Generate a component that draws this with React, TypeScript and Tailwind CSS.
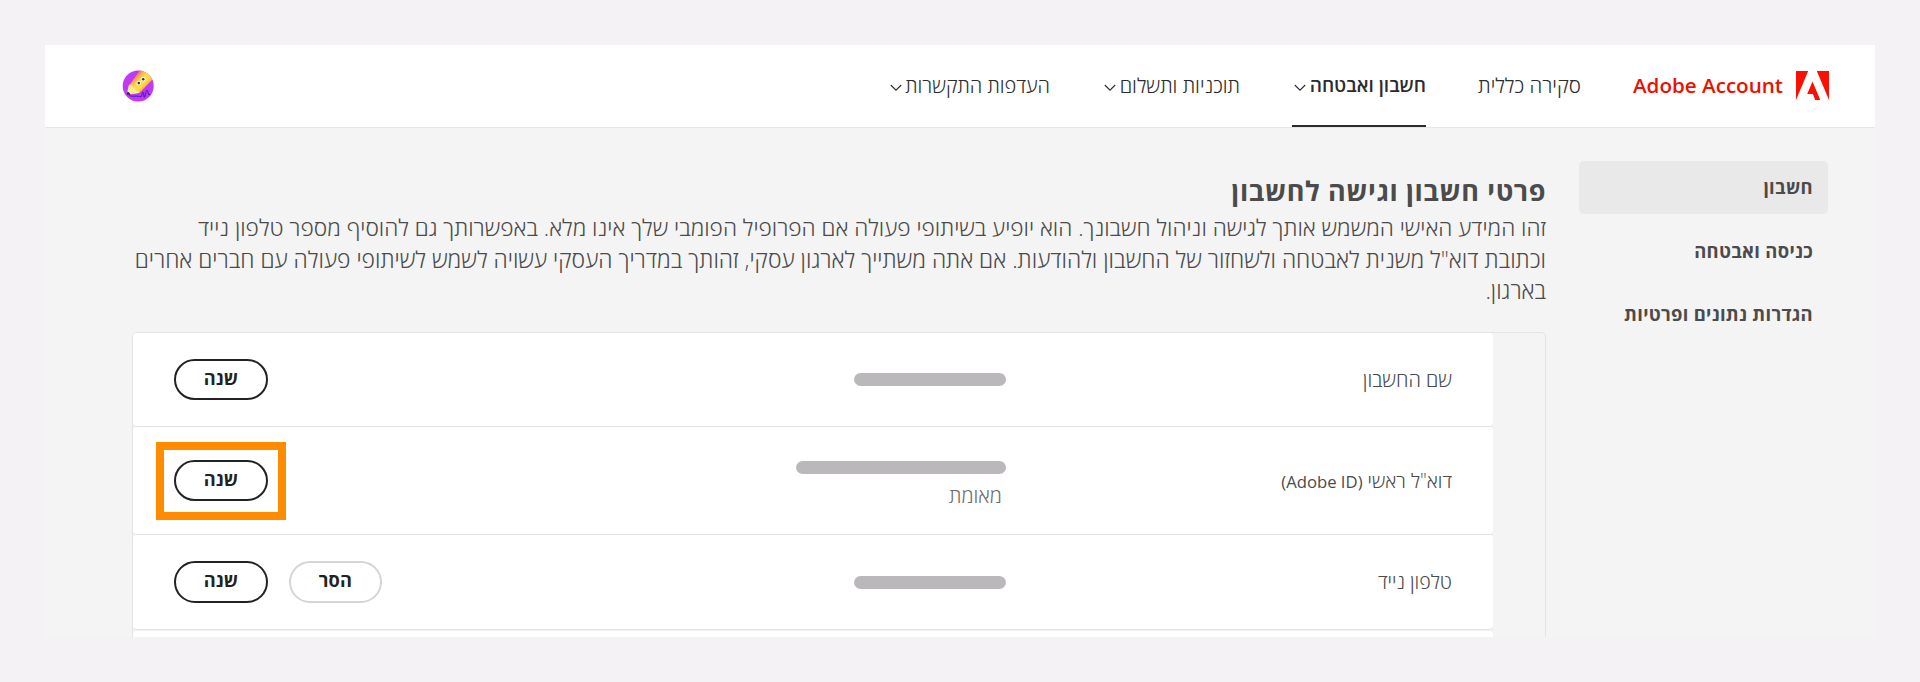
import clsx from 'clsx';

type NavItem = { label: string; className: string; active?: boolean; menu?: boolean };

const navItems: NavItem[] = [
  { label: 'סקירה כללית', className: 'w-[103px] text-[20.5px]' },
  { label: 'חשבון ואבטחה', className: 'w-[134px] text-[19px]', active: true, menu: true },
  { label: 'תוכניות ותשלום', className: 'w-[138px] text-[20.2px]', menu: true },
  { label: 'העדפות התקשרות', className: 'w-[162px] text-[20px]', menu: true },
];

const sideItems = [
  { label: 'חשבון', active: true },
  { label: 'כניסה ואבטחה' },
  { label: 'הגדרות נתונים ופרטיות' },
];

function AdobeLogo() {
  return (
    <svg width="33" height="29" viewBox="0 0 33 29" fill="#fa0f00">
      <path d="M0 0h12.2L0 29z" />
      <path d="M20.8 0H33v29z" />
      <path d="M16.5 10.4 24.3 29h-5.1l-2.3-5.9h-5.7z" />
    </svg>
  );
}

function Chevron() {
  return (
    <svg width="12" height="8" viewBox="0 0 12 8" fill="none" stroke="#2c2c2c" strokeWidth="1.1">
      <path d="M.8 1 6 6.2 11.2 1" />
    </svg>
  );
}

function Avatar() {
  return (
    <svg width="32" height="32" viewBox="0 0 32 32">
      <defs>
        <clipPath id="avatar">
          <circle cx="16.2" cy="16" r="15.5" />
        </clipPath>
        <linearGradient id="pencil" x1="12" y1="7" x2="24" y2="18" gradientUnits="userSpaceOnUse">
          <stop offset="0" stopColor="#f2707a" />
          <stop offset=".2" stopColor="#fdb04a" />
          <stop offset=".45" stopColor="#ffe04a" />
          <stop offset=".75" stopColor="#ffd93a" />
          <stop offset="1" stopColor="#fb9a4a" />
        </linearGradient>
      </defs>
      <g clipPath="url(#avatar)">
        <rect width="32" height="32" fill="#bf3af2" />
        <path d="M7 15.5 19-1l14 8-15.500 15.800z" fill="url(#pencil)" />
        <path d="M7 15c-.8 2.500-1.800 6-2 9.500 4 0 8.500-.500 12.500-1.700-.5-2-2-2.800-3.500-2.600 0-2-1.300-3.200-3.200-3C10.500 15.300 9 14.500 7 15z" fill="#ffec8c" />
        <path d="M5.300 21.800 4.800 25l3.600-.3c-.4-1.500-1.500-2.600-3.100-2.900z" fill="#33208a" />
        <circle cx="16.700" cy="12.900" r="2.200" fill="#fff" />
        <circle cx="21.200" cy="9.200" r="2.200" fill="#fff" />
        <circle cx="16.800" cy="13.100" r="1.300" fill="#2d2f7a" />
        <circle cx="21.200" cy="9.300" r="1.300" fill="#2d2f7a" />
        <path
          d="M7 25.500c4 2 7-.5 11 1 2.500 1 1-2.500 3-4 1.500-.5 0 5 1.500 4.500 1.700-1 .8-6.500 2.500-7 1.500 0 .5 6.500 3 4"
          fill="none"
          stroke="#5a1fc8"
          strokeWidth="1.200"
        />
      </g>
    </svg>
  );
}

function Header() {
  return (
    <header className="flex h-[83px] shrink-0 border-b border-[#e6e6e6] bg-white pr-[46px] pl-[77px]">
      <div className="flex w-[196px] items-center gap-[13px] pb-px">
        <AdobeLogo />
        <span dir="ltr" className="text-[20.6px] font-semibold whitespace-nowrap text-[#eb1000]">
          Adobe Account
        </span>
      </div>
      <nav className="mr-[52px] flex gap-[52px]">
        {navItems.map((item) => (
          <div
            key={item.label}
            className={clsx(
              'flex items-center justify-between whitespace-nowrap text-[#2c2c2c]',
              item.active ? 'border-b-2 border-[#2c2c2c] pt-px font-semibold' : 'pb-px font-light',
              item.className
            )}
          >
            <span>{item.label}</span>
            {item.menu && (
              <span className="pt-1 pl-[2px]">
                <Chevron />
              </span>
            )}
          </div>
        ))}
      </nav>
      <div className="mr-auto flex items-center pb-px">
        <Avatar />
      </div>
    </header>
  );
}

function Sidebar() {
  return (
    <aside className="mt-[33px] mr-[47px] flex w-[249px] shrink-0 flex-col gap-[11px]">
      {sideItems.map((item) => (
        <div
          key={item.label}
          className={clsx(
            'flex h-[52.5px] items-center rounded-[5px] pr-[15px] text-[18.4px] font-bold tracking-[0.3px] text-[#4b4b4b]',
            item.active && 'bg-[#e9e9e9]'
          )}
        >
          {item.label}
        </div>
      ))}
    </aside>
  );
}

function PillButton({ children, quiet }: { children: string; quiet?: boolean }) {
  return (
    <button
      className={clsx(
        'flex h-[41.5px] items-center justify-center rounded-full border-2 pb-[2px] text-[18.2px] font-bold tracking-[0.2px] text-[#222]',
        quiet ? 'w-[93px] border-[#d5d5d5]' : 'w-[94px] border-[#222]'
      )}
    >
      {children}
    </button>
  );
}

function Bar({ className }: { className: string }) {
  return <div className={clsx('h-[13px] rounded-full bg-[#bab8bb]', className)} />;
}

export default function App() {
  return (
    <div dir="rtl" className="h-[682px] overflow-hidden bg-[#f4f2f5] px-[45px] pt-[45px] font-['Open_Sans',sans-serif]">
      <div className="flex h-[592px] flex-col overflow-hidden bg-[#f4f4f4]">
        <Header />
        <div className="flex">
          <Sidebar />
          <main className="mr-[33px] w-[1414px] pt-[42px] text-[#4b4b4b]">
            <h1 className="h-[42px] text-[27px] leading-[41px] font-bold tracking-[0.6px]">פרטי חשבון וגישה לחשבון</h1>
            <div className="font-light whitespace-nowrap">
              <p className="h-[31.5px] text-[22.65px] leading-[31.5px]">
                זהו המידע האישי המשמש אותך לגישה וניהול חשבונך. הוא יופיע בשיתופי פעולה אם הפרופיל הפומבי שלך אינו מלא. באפשרותך גם להוסיף מספר טלפון נייד
              </p>
              <p className="h-[31.5px] text-[22.86px] leading-[31.5px]">
                וכתובת דוא"ל משנית לאבטחה ולשחזור של החשבון ולהודעות. אם אתה משתייך לארגון עסקי, זהותך במדריך העסקי עשויה לשמש לשיתופי פעולה עם חברים אחרים
              </p>
              <p className="h-8 text-[22.7px] leading-8">בארגון.</p>
            </div>

            <div className="mt-[25px] rounded-t-[5px] border border-b-0 border-[#e4e4e4] pr-[52px] text-[19.4px] font-light">
              <div className="flex h-[94px] items-center rounded-[4px] border-b border-[#e1e1e1] bg-white pr-[41px] pl-[41px]">
                <div className="w-[446px] text-[20px]">שם החשבון</div>
                <Bar className="w-[152px]" />
                <div className="mr-auto">
                  <PillButton>שנה</PillButton>
                </div>
              </div>

              <div className="flex h-[108px] items-center rounded-[4px] border-b border-[#e1e1e1] bg-white pr-[41px] pl-[23px]">
                <div className="w-[446px]">
                  דוא"ל ראשי <span className="text-[16.7px] font-normal">(Adobe ID)</span>
                </div>
                <div className="flex w-[210px] flex-col pt-[9px]">
                  <Bar className="w-[210px]" />
                  <div className="mt-[7px] pr-[4px] text-[20.2px] leading-[28px] text-[#6e6e6e]">מאומת</div>
                </div>
                {/* highlighted action */}
                <div className="mr-auto flex h-[78px] w-[130px] items-center justify-center border-8 border-[#ff8c00]">
                  <PillButton>שנה</PillButton>
                </div>
              </div>

              <div className="flex h-[95px] items-center rounded-[4px] border-b border-[#e1e1e1] bg-white pr-[41px] pl-[41px]">
                <div className="w-[446px] text-[19.6px]">טלפון נייד</div>
                <Bar className="w-[152px]" />
                <div className="mr-auto flex gap-[21px]">
                  <PillButton quiet>הסר</PillButton>
                  <PillButton>שנה</PillButton>
                </div>
              </div>

              <div className="mt-px h-10 rounded-[4px] bg-white" />
            </div>
          </main>
        </div>
      </div>
    </div>
  );
}
